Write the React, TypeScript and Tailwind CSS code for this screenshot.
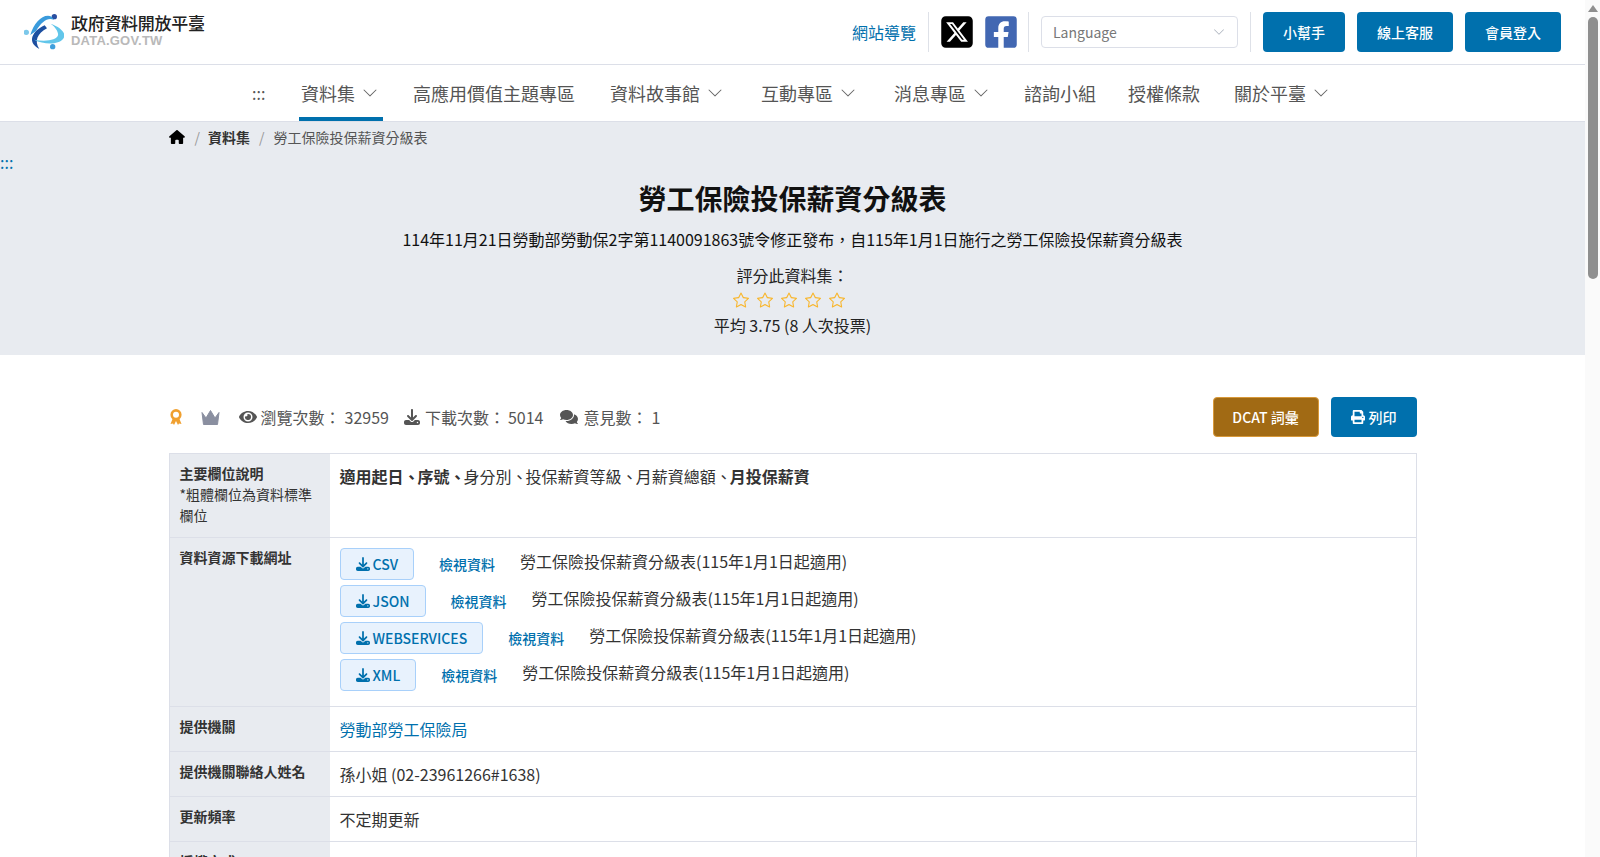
import { BsChevronDown, BsStar } from "react-icons/bs";
import { FaComments, FaEye, FaFacebookSquare, FaPrint } from "react-icons/fa";
import { FaDownload, FaHouse, FaSquareXTwitter } from "react-icons/fa6";

const NAV = [
  { label: "資料集", chevron: true, active: true, ml: "" },
  { label: "高應用價值主題專區", ml: "ml-[30px]" },
  { label: "資料故事館", chevron: true, ml: "ml-[35px]" },
  { label: "互動專區", chevron: true, ml: "ml-[37px]" },
  { label: "消息專區", chevron: true, ml: "ml-[37px]" },
  { label: "諮詢小組", ml: "ml-[34px]" },
  { label: "授權條款", ml: "ml-[32px]" },
  { label: "關於平臺", chevron: true, ml: "ml-[34px]" },
];

const DOWNLOADS = ["CSV", "JSON", "WEBSERVICES", "XML"];

function Logo() {
  return (
    <div className="flex items-center">
      <svg width="40" height="36" viewBox="0 0 120 108">
        <circle cx="91" cy="8" r="8" fill="#2a4ea0" />
        <circle cx="7" cy="55" r="8" fill="#7cc8ea" />
        <circle cx="86" cy="98" r="8" fill="#3f9fdc" />
        <path d="M19 63C29 29 50 5 72 5C80 5 86 9 90 18C72 9 53 23 36 51Z" fill="#3a9bdc" />
        <path d="M62 34C28 49 5 84 46 105C30 81 40 59 69 43Z" fill="#1d4fa0" />
        <path d="M80 29C113 41 129 60 117 75C104 92 61 93 30 77C66 85 98 78 102 64C104 54 95 40 80 29Z" fill="#62c6ea" />
      </svg>
      <div className="mt-[-4px] ml-[7px] flex flex-col">
        <span className="text-[17px] leading-[20px] font-medium tracking-[-0.3px] text-[#222]">政府資料開放平臺</span>
        <span className="font-['Liberation_Sans',sans-serif] text-[13px] leading-[15px] font-bold tracking-[0.2px] text-[#b9b9b9]">
          DATA.GOV.TW
        </span>
      </div>
    </div>
  );
}

function Header() {
  return (
    <header className="flex h-[65px] items-center justify-between border-b border-[#dcdfe8] pr-[24px] pl-[24px]">
      <Logo />
      <div className="flex items-center">
        <a className="text-[16px] text-[#0070ad]">網站導覽</a>
        <div className="mr-[12px] ml-[12px] h-[40px] w-px bg-[#dee1e8]" />
        <FaSquareXTwitter className="h-[36px] w-[32px] text-black" />
        <FaFacebookSquare className="ml-[12px] h-[36px] w-[32px] text-[#4267b2]" />
        <div className="mr-[12px] ml-[11px] h-[40px] w-px bg-[#dee1e8]" />
        <div className="flex h-[32px] w-[197px] items-center justify-between rounded-[4px] border border-[#dcdfe8] pr-[12px] pl-[11px]">
          <span className="text-[14px] text-[#777]">Language</span>
          <BsChevronDown className="h-[12px] w-[12px] text-[#aab0bb]" />
        </div>
        <div className="mr-[12px] ml-[12px] h-[40px] w-px bg-[#dee1e8]" />
        <button className="h-[40px] w-[82px] rounded-[4px] bg-[#0070ad] text-[14px] font-medium text-white">小幫手</button>
        <button className="ml-[12px] h-[40px] w-[96px] rounded-[4px] bg-[#0070ad] text-[14px] font-medium text-white">線上客服</button>
        <button className="ml-[12px] h-[40px] w-[96px] rounded-[4px] bg-[#0070ad] text-[14px] font-medium text-white">會員登入</button>
      </div>
    </header>
  );
}

function Nav() {
  return (
    <nav className="flex h-[57px] items-stretch border-b border-[#dcdfe8] pl-[252px] text-[18px] text-[#555]">
      <span className="flex w-[47px] items-center text-[16px] text-[#555]">:::</span>
      {NAV.map((item) => (
        <div
          key={item.label}
          className={`flex items-center border-b-[4px] pt-[4px] ${item.ml} ${item.active ? "border-[#0070ad] pr-[4px] pl-[2px]" : "border-transparent"}`}
        >
          <span>{item.label}</span>
          {item.chevron && <BsChevronDown className="mr-[1px] ml-[7px] h-[16px] w-[16px] text-[#666]" />}
        </div>
      ))}
    </nav>
  );
}

function Banner() {
  return (
    <section className="h-[233px] bg-[#e8ebf0]">
      <div className="mx-auto flex h-[30px] w-[1248px] items-center text-[14px]">
        <FaHouse className="h-[14px] w-[16px] text-black" />
        <span className="ml-[10px] text-[#999]">/</span>
        <span className="ml-[8px] font-bold text-[#333]">資料集</span>
        <span className="ml-[9px] text-[#999]">/</span>
        <span className="ml-[9px] text-[#555]">勞工保險投保薪資分級表</span>
      </div>
      <div className="h-[25px] text-[16px] leading-[20px] text-[#0070ad]">:::</div>
      <h1 className="text-center text-[28px] leading-[42px] font-bold text-[#111]">勞工保險投保薪資分級表</h1>
      <p className="mt-[8px] text-center text-[16px] leading-[24px] text-[#111]">
        114年11月21日勞動部勞動保2字第1140091863號令修正發布，自115年1月1日施行之勞工保險投保薪資分級表
      </p>
      <p className="mt-[12px] text-center text-[16px] leading-[24px] text-[#222]">評分此資料集：</p>
      <div className="mt-[5px] flex justify-center gap-[8px] pr-[8px] text-[#f8b62d]">
        {[0, 1, 2, 3, 4].map((i) => (
          <BsStar key={i} className="h-[16px] w-[16px]" />
        ))}
      </div>
      <p className="mt-[5px] text-center text-[16px] leading-[24px] text-[#222]">平均 3.75 (8 人次投票)</p>
    </section>
  );
}

function Medal() {
  return (
    <svg width="14" height="16" viewBox="0 0 14 16" fill="#f0a030">
      <path d="M3.5 10L1.5 15L4 14.5L5 16L7 12L9 16L10 14.5L12.5 15L10.500 10Z" />
      <circle cx="7" cy="5.700" r="4.300" fill="none" stroke="#f0a030" strokeWidth="2.600" />
    </svg>
  );
}

function Crown() {
  return (
    <svg width="19" height="15" viewBox="0 0 19 15" fill="#8a8fa0">
      <path d="M1 2.500L5 8L9.500 0.500L14 8L18 2.500L16.500 14.500H2.500Z" stroke="#8a8fa0" strokeLinejoin="round" />
    </svg>
  );
}

function Stats() {
  return (
    <div className="flex h-[40px] items-center justify-between text-[16px] text-[#555]">
      <div className="flex items-center">
        <Medal />
        <div className="ml-[18px]">
          <Crown />
        </div>
        <FaEye className="ml-[19px] h-[16px] w-[18px] text-[#555]" />
        <span className="ml-[4px]">瀏覽次數：</span>
        <span className="ml-[4px]">32959</span>
        <FaDownload className="ml-[15px] h-[16px] w-[16px] text-[#555]" />
        <span className="ml-[5px]">下載次數：</span>
        <span className="ml-[3px]">5014</span>
        <FaComments className="ml-[16px] h-[16px] w-[20px] text-[#555]" />
        <span className="ml-[4px]">意見數：</span>
        <span className="ml-[4px]">1</span>
      </div>
      <div className="flex items-center gap-[12px]">
        <button className="h-[40px] w-[106px] rounded-[4px] border border-[#d8993a] bg-[#a16a14] text-[14px] font-medium text-white">
          DCAT 詞彙
        </button>
        <button className="flex h-[40px] w-[86px] items-center justify-center rounded-[4px] bg-[#0070ad] text-[14px] font-medium text-white">
          <FaPrint className="mr-[4px] h-[14px] w-[14px]" />
          列印
        </button>
      </div>
    </div>
  );
}

function Row({ label, children, className = "" }: { label: React.ReactNode; children: React.ReactNode; className?: string }) {
  return (
    <div className={`flex border-b border-[#dcdfe8] last:border-b-0 ${className}`}>
      <div className="w-[160px] shrink-0 bg-[#e8ebf0] px-[10px] pt-[9px] pb-[10px] text-[14px] leading-[21px] text-[#333]">{label}</div>
      <div className="flex-1 p-[10px] text-[16px] leading-[24px] text-[#333]">{children}</div>
    </div>
  );
}

function Sep() {
  return <span className="tracking-[-2px]">、</span>;
}

function DataTable() {
  return (
    <div className="mt-[16px] border border-[#dcdfe8]">
      <Row label={<><b className="font-bold">主要欄位說明</b><br />*粗體欄位為資料標準欄位</>} className="h-[84px]">
        <b className="font-bold">適用起日<Sep />序號<Sep /></b>身分別<Sep />投保薪資等級<Sep />月薪資總額<Sep /><b className="font-bold">月投保薪資</b>
      </Row>
      <Row label={<b className="font-bold">資料資源下載網址</b>} className="h-[169px]">
        <div className="flex flex-col gap-[5px]">
          {DOWNLOADS.map((d) => (
            <div key={d} className="flex items-start">
              <button className="flex h-[32px] items-center rounded-[4px] border border-[#a8d0fa] bg-[#e8f2fd] px-[15px] text-[14px] font-medium text-[#0070ad]">
                <FaDownload className="mr-[3px] h-[14px] w-[14px]" />
                {d}
              </button>
              <a className="ml-[25px] pt-[6px] text-[14px] leading-[21px] font-medium text-[#0070ad]">檢視資料</a>
              <span className="ml-[25px] pt-[1px] leading-[24px]">勞工保險投保薪資分級表(115年1月1日起適用)</span>
            </div>
          ))}
        </div>
      </Row>
      <Row label={<b className="font-bold">提供機關</b>} className="h-[45px]">
        <a className="text-[#0070ad]">勞動部勞工保險局</a>
      </Row>
      <Row label={<b className="font-bold">提供機關聯絡人姓名</b>} className="h-[45px]">
        孫小姐 (02-23961266#1638)
      </Row>
      <Row label={<b className="font-bold">更新頻率</b>} className="h-[45px]">
        不定期更新
      </Row>
      <Row label={<b className="font-bold">授權方式</b>}>政府資料開放授權條款-第1版</Row>
    </div>
  );
}

export default function App() {
  return (
    <div className="flex h-[857px] overflow-hidden bg-white font-['Noto_Sans_CJK_TC',sans-serif]">
      <div className="w-[1585px] shrink-0">
        <Header />
        <Nav />
        <Banner />
        <main className="mx-auto w-[1248px] pt-[42px]">
          <Stats />
          <DataTable />
        </main>
      </div>
      <aside className="flex w-[15px] shrink-0 flex-col items-center bg-[#fafafa]">
        <div className="mt-[5px] h-0 w-0 border-x-[5px] border-b-[7px] border-x-transparent border-b-[#8f8f8f]" />
        <div className="mt-[5px] h-[262px] w-[10px] rounded-[5px] bg-[#8f8f8f]" />
      </aside>
    </div>
  );
}
